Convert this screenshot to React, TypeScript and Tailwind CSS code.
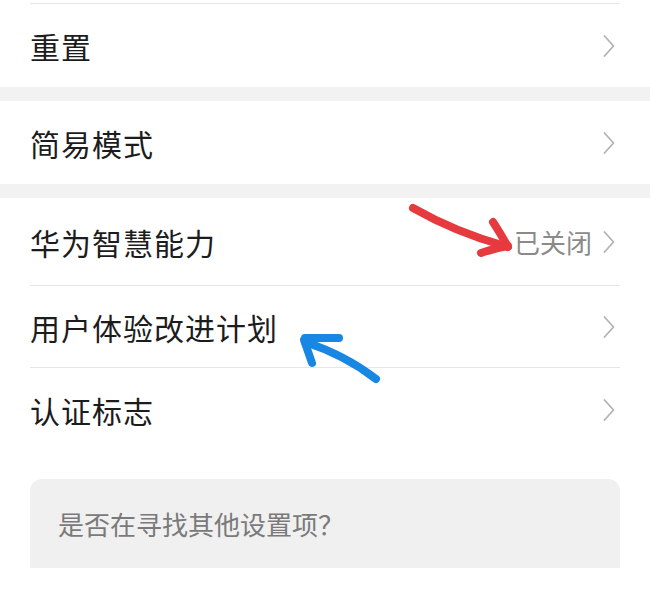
import React from "react";

const Chevron = () => (
  <svg width="14" height="24" viewBox="0 0 14 24" className="shrink-0">
    <path d="M2.5 2 L11.5 12 L2.5 22" fill="none" stroke="#b3b3b3" strokeWidth="1.8" strokeLinecap="round" strokeLinejoin="round" />
  </svg>
);

const Row = ({ label, value, h }: { label: string; value?: string; h: string }) => (
  <div className={`flex items-center justify-between pl-[30px] pr-[34px] ${h}`}>
    <span className="text-[30px] leading-none text-[#1c1c1c] tracking-[1px]">{label}</span>
    <div className="flex items-center gap-[10px]">
      {value && <span className="text-[26px] leading-none text-[#8a8a8a]">{value}</span>}
      <Chevron />
    </div>
  </div>
);

const Divider = () => <div className="mx-[30px] h-px bg-[#e6e6e6]" />;
const Band = () => <div className="h-[14px] bg-[#f2f2f2]" />;

export default function App() {
  return (
    <div
      className="relative w-[650px] h-[591px] bg-white overflow-hidden"
      style={{ fontFamily: '"Noto Sans CJK SC", "Noto Sans", sans-serif' }}
    >
      <div className="pt-[3px]">
        <Divider />
        <Row label="重置" h="h-[83px]" />
        <Band />
        <Row label="简易模式" h="h-[83px]" />
        <Band />
        <Row label="华为智慧能力" value="已关闭" h="h-[87px]" />
        <Divider />
        <Row label="用户体验改进计划" h="h-[81px]" />
        <Divider />
        <Row label="认证标志" h="h-[83px]" />
        <div className="h-[28px]" />
        <div className="mx-[30px] h-[89px] rounded-t-[12px] bg-[#f0f0f0] flex items-center pl-[28px]">
          <span className="text-[26px] leading-none text-[#7a7a7a]">是否在寻找其他设置项？</span>
        </div>
      </div>
      <svg className="absolute left-0 top-0 pointer-events-none" width="650" height="591" viewBox="0 0 650 591">
        <g fill="none" stroke="#e63a3f" strokeWidth="8" strokeLinecap="round" strokeLinejoin="round">
          <path d="M413 208 Q455 232 505 246" />
          <path d="M493 222 Q502 236 508 247" />
          <path d="M481 253 Q495 248 508 246" />
        </g>
        <g fill="none" stroke="#1787e3" strokeWidth="8" strokeLinecap="round" strokeLinejoin="round">
          <path d="M376 379 Q345 355 305 342" />
          <path d="M305 338 L339 338" />
          <path d="M304 340 L312 363" />
        </g>
      </svg>
    </div>
  );
}
